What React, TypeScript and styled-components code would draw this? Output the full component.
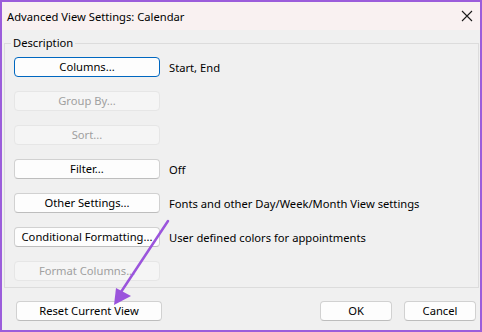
import React from 'react';
import styled, { createGlobalStyle } from 'styled-components';

const GlobalStyle = createGlobalStyle`
  html, body {
    margin: 0;
    padding: 0;
    background: #ffffff;
  }
  * {
    box-sizing: border-box;
  }
`;

const Window = styled.div`
  position: relative;
  width: 482px;
  height: 332px;
  border: 2px solid #9b5ddb;
  background: #f0f0f0;
  display: flex;
  flex-direction: column;
  font-family: "Noto Sans", "Open Sans", sans-serif;
  font-size: 11.2px;
  color: #000;
  overflow: hidden;
`;

const TitleBar = styled.div`
  height: 28px;
  background: #f9f1f1;
  display: flex;
  align-items: center;
  justify-content: space-between;
  padding: 0 6px 0 5px;
`;

const Title = styled.span`
  font-size: 11.2px;
`;

const CloseButton = styled.div`
  width: 14px;
  height: 14px;
  display: flex;
  align-items: center;
  justify-content: center;
`;

const Body = styled.div`
  flex: 1;
  display: flex;
  flex-direction: column;
  padding: 5px 1px 0 2px;
`;

const GroupBox = styled.fieldset`
  margin: 0;
  border: 1px solid #dcdcdc;
  padding: 6px 0 6px 9px;
  display: flex;
  flex-direction: column;
  gap: 14px;
`;

const Legend = styled.legend`
  padding: 0 2px;
  margin-left: -3px;
  line-height: 16px;
`;

const Row = styled.div`
  display: flex;
  align-items: center;
  gap: 9px;
`;

const Button = styled.button<{ $disabled?: boolean; $focused?: boolean; $width?: number }>`
  width: ${(p) => p.$width ?? 146}px;
  height: 20px;
  padding: 0;
  border-radius: 4px;
  font-family: inherit;
  font-size: 11.2px;
  line-height: 18px;
  background: ${(p) => (p.$disabled ? '#f5f5f5' : '#fdfdfd')};
  color: ${(p) => (p.$disabled ? '#a0a0a0' : '#000')};
  border: 1px solid ${(p) => (p.$focused ? '#0067c0' : p.$disabled ? '#e6e6e6' : '#d1d1d1')};
  border-bottom-color: ${(p) => (p.$focused ? '#0067c0' : p.$disabled ? '#e6e6e6' : '#bdbdbd')};
`;

const Label = styled.span`
  white-space: nowrap;
`;

const Footer = styled.div`
  display: flex;
  justify-content: space-between;
  align-items: center;
  padding: 13px 3px 0 12px;
`;

const ButtonGroup = styled.div`
  display: flex;
  gap: 12px;
`;

const Overlay = styled.svg`
  position: absolute;
  left: -2px;
  top: -2px;
  pointer-events: none;
`;

const rows = [
  { text: 'Columns...', label: 'Start, End', focused: true },
  { text: 'Group By...', disabled: true },
  { text: 'Sort...', disabled: true },
  { text: 'Filter...', label: 'Off' },
  { text: 'Other Settings...', label: 'Fonts and other Day/Week/Month View settings' },
  { text: 'Conditional Formatting...', label: 'User defined colors for appointments' },
  { text: 'Format Columns...', disabled: true },
];

const App = () => {
  return (
    <>
      <GlobalStyle />
      <Window>
        <TitleBar>
          <Title>Advanced View Settings: Calendar</Title>
          <CloseButton>
            <svg width="12" height="12" viewBox="0 0 12 12">
              <path d="M1 1 L11 11 M11 1 L1 11" stroke="#1a1a1a" strokeWidth="1.1" />
            </svg>
          </CloseButton>
        </TitleBar>
        <Body>
          <GroupBox>
            <Legend>Description</Legend>
            {rows.map((r) => (
              <Row key={r.text}>
                <Button $disabled={r.disabled} $focused={r.focused}>{r.text}</Button>
                {r.label && <Label>{r.label}</Label>}
              </Row>
            ))}
          </GroupBox>
          <Footer>
            <Button>Reset Current View</Button>
            <ButtonGroup>
              <Button $width={72}>OK</Button>
              <Button $width={72}>Cancel</Button>
            </ButtonGroup>
          </Footer>
        </Body>
        <Overlay width="482" height="332" viewBox="0 0 482 332">
          <line x1="168" y1="221" x2="121" y2="292" stroke="#9b55dc" strokeWidth="2.5" strokeLinecap="round" />
          <polygon points="114,305 116,288 131,296" fill="#9b55dc" />
        </Overlay>
      </Window>
    </>
  );
};

export default App;
